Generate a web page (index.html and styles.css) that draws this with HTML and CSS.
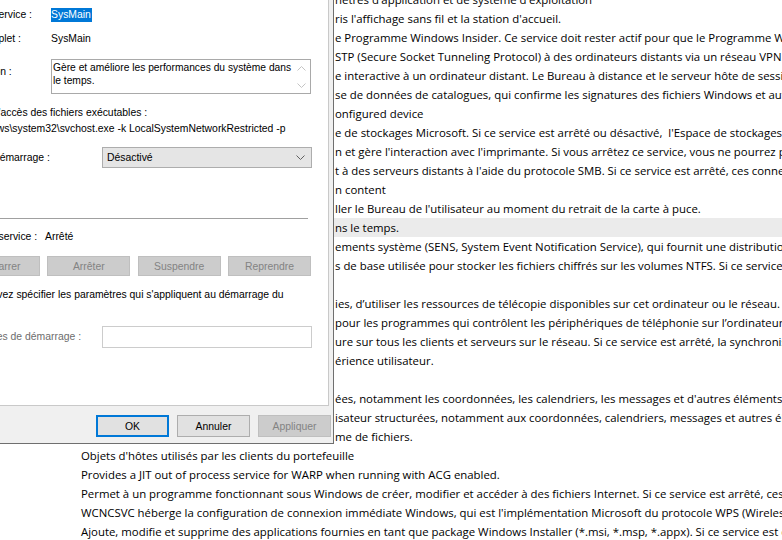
FILE: index.html
```html
<!DOCTYPE html>
<html lang="fr">
<head>
<meta charset="utf-8">
<title>Propriétés de SysMain</title>
<link rel="stylesheet" href="styles.css">
</head>
<body>
<div class="screen">
  <ul class="list">
    <li class="item cut">nètres d'application et de système d'exploitation</li>
    <li class="item cut">ris l'affichage sans fil et la station d'accueil.</li>
    <li class="item cut">e Programme Windows Insider. Ce service doit rester actif pour que le Programme Windows Insider fonctionne.</li>
    <li class="item cut">STP (Secure Socket Tunneling Protocol) à des ordinateurs distants via un réseau VPN. Si ce service est désactivé</li>
    <li class="item cut">e interactive à un ordinateur distant. Le Bureau à distance et le serveur hôte de session Bureau à distance</li>
    <li class="item cut">se de données de catalogues, qui confirme les signatures des fichiers Windows et autorise</li>
    <li class="item cut">onfigured device</li>
    <li class="item cut">e de stockages Microsoft. Si ce service est arrêté ou désactivé,&nbsp; l'Espace de stockages ne fonctionnera pas</li>
    <li class="item cut">n et gère l'interaction avec l'imprimante. Si vous arrêtez ce service, vous ne pourrez plus imprimer</li>
    <li class="item cut">t à des serveurs distants à l'aide du protocole SMB. Si ce service est arrêté, ces connexions</li>
    <li class="item cut">n content</li>
    <li class="item cut">ller le Bureau de l'utilisateur au moment du retrait de la carte à puce.</li>
    <li class="item cut selected">ns le temps.</li>
    <li class="item cut">ements système (SENS, System Event Notification Service), qui fournit une distribution</li>
    <li class="item cut">s de base utilisée pour stocker les fichiers chiffrés sur les volumes NTFS. Si ce service est arrêté</li>
    <li class="item cut"></li>
    <li class="item cut">ies, d’utiliser les ressources de télécopie disponibles sur cet ordinateur ou le réseau.</li>
    <li class="item cut">pour les programmes qui contrôlent les périphériques de téléphonie sur l’ordinateur local</li>
    <li class="item cut">ure sur tous les clients et serveurs sur le réseau. Si ce service est arrêté, la synchronisation</li>
    <li class="item cut">érience utilisateur.</li>
    <li class="item cut"></li>
    <li class="item cut">ées, notamment les coordonnées, les calendriers, les messages et d'autres éléments de</li>
    <li class="item cut">isateur structurées, notamment aux coordonnées, calendriers, messages et autres éléments</li>
    <li class="item cut">me de fichiers.</li>
    <li class="item">Objets d'hôtes utilisés par les clients du portefeuille</li>
    <li class="item">Provides a JIT out of process service for WARP when running with ACG enabled.</li>
    <li class="item">Permet à un programme fonctionnant sous Windows de créer, modifier et accéder à des fichiers Internet. Si ce service est arrêté, ces fichiers</li>
    <li class="item">WCNCSVC héberge la configuration de connexion immédiate Windows, qui est l'implémentation Microsoft du protocole WPS (Wireless Protected Setup)</li>
    <li class="item">Ajoute, modifie et supprime des applications fournies en tant que package Windows Installer (*.msi, *.msp, *.appx). Si ce service est désactivé</li>
  </ul>

  <div class="dialog">
    <div class="panel">
      <div class="row r-name"><span class="lbl">Nom du service :</span><span class="sel">SysMain</span></div>
      <div class="row r-full"><span class="lbl">Nom complet :</span><span>SysMain</span></div>
      <div class="row r-desc">
        <span class="lbl lbl-desc">Description :</span>
        <div class="textarea">
          <div class="ta-text">Gère et améliore les performances du système dans<br>le temps.</div>
          <div class="ta-scroll">
            <svg class="arrow" width="9" height="5" viewBox="0 0 9 5"><polyline points="0.5,4.5 4.5,0.5 8.5,4.5" fill="none" stroke="#c4c4c4" stroke-width="1"/></svg>
            <svg class="arrow" width="9" height="5" viewBox="0 0 9 5"><polyline points="0.5,0.5 4.5,4.5 8.5,0.5" fill="none" stroke="#c4c4c4" stroke-width="1"/></svg>
          </div>
        </div>
      </div>
      <div class="plain path-lbl">Chemin d'accès des fichiers exécutables :</div>
      <div class="plain path">C:\Windows\system32\svchost.exe -k LocalSystemNetworkRestricted -p</div>
      <div class="row r-type">
        <span class="lbl-wide">Type de démarrage :</span>
        <div class="select"><span>Désactivé</span><svg width="9" height="5" viewBox="0 0 9 5"><polyline points="0.5,0.5 4.5,4.5 8.5,0.5" fill="none" stroke="#606060" stroke-width="1"/></svg></div>
      </div>
      <div class="sep"></div>
      <div class="row r-status"><span class="lbl-status">Statut du service :</span><span>Arrêté</span></div>
      <div class="svc-btns">
        <button class="btn dis svc">Démarrer</button>
        <button class="btn dis svc">Arrêter</button>
        <button class="btn dis svc">Suspendre</button>
        <button class="btn dis svc">Reprendre</button>
      </div>
      <p class="hint">Vous pouvez spécifier les paramètres qui s'appliquent au démarrage du<br>service.</p>
      <div class="row r-params">
        <span class="lbl-wide grey">Paramètres de démarrage :</span>
        <div class="input"></div>
      </div>
    </div>
    <div class="actions">
      <button class="btn act ok">OK</button>
      <button class="btn act">Annuler</button>
      <button class="btn act dis">Appliquer</button>
    </div>
  </div>
</div>
</body>
</html>
```
FILE: styles.css
```css
html, body { margin: 0; padding: 0; background: #fff; }
.screen { position: relative; width: 782px; height: 540px; overflow: hidden; background: #fff; }

/* services list in the background */
.list {
  list-style: none; margin: -10px 0 0 0; padding: 0;
  font-family: "Open Sans", "Noto Sans", sans-serif; font-size: 11.4px; color: #000;
}
.item { height: 19px; line-height: 19px; padding-left: 81px; white-space: nowrap; overflow: hidden; }
.item.cut { padding-left: 335px; }
.item.selected { background: #ebebeb; }

/* properties dialog */
.dialog {
  position: absolute; left: -60px; top: -30px;
  width: 394px; height: 474px; box-sizing: border-box;
  border: 1px solid #6f6f6f; background: #f0f0f0;
  padding: 0 4px 0 9px;
  font-family: "Liberation Sans", Arial, sans-serif; font-size: 10.4px; color: #000;
}
.panel {
  height: 435px; box-sizing: border-box;
  background: #fff; border: 1px solid #c9c9c9; border-top: 0;
  padding: 37px 0 0 3px;
}
.row { display: flex; align-items: center; line-height: 14px; }
.lbl { width: 97px; flex: none; white-space: nowrap; }
.lbl-wide { width: 148px; flex: none; white-space: nowrap; }
.lbl-status { width: 91px; flex: none; white-space: nowrap; }
.grey { color: #6d6d6d; }
.sel { background: #0078d7; color: #fff; padding: 0 1px 0 0; }

.r-name { height: 14px; }
.r-full { margin-top: 10px; height: 14px; }
.r-desc { margin-top: 13px; align-items: flex-start; }
.lbl-desc { margin-top: 6px; }
.textarea {
  width: 260px; height: 35px; box-sizing: border-box;
  border: 1px solid #a9a9a9; background: #fff;
  display: flex; justify-content: space-between;
}
.ta-text { padding: 1px 0 0 1px; line-height: 13px; white-space: nowrap; font-size: 10.25px; }
.ta-scroll {
  width: 17px; display: flex; flex-direction: column; align-items: center;
  justify-content: space-between; padding: 6px 0 5px; box-sizing: border-box;
}
.arrow { display: block; }

.plain { line-height: 14px; white-space: nowrap; }
.path-lbl { margin-top: 12px; }
.path { margin-top: 2px; }

.r-type { margin-top: 11px; height: 21px; }
.select {
  width: 210px; height: 21px; box-sizing: border-box;
  border: 1px solid #adadad; background: #e5e5e5;
  display: flex; align-items: center; justify-content: space-between;
  padding: 0 6px 0 4px;
}

.sep { margin-top: 50px; height: 1px; width: 354px; background: #a0a0a0; }
.r-status { margin-top: 11px; height: 14px; }

.btn {
  font-family: inherit; font-size: inherit; margin: 0; padding: 0;
  box-sizing: border-box; background: #e1e1e1; border: 1px solid #adadad; color: #000;
}
.btn.dis { background: #cccccc; border-color: #bfbfbf; color: #838383; }
.svc-btns { margin: 12px 0 0 3px; width: 354px; display: flex; justify-content: space-between; }
.svc { width: 83px; height: 20px; }

.hint { margin: 12px 0 0 0; line-height: 14px; white-space: nowrap; }
.r-params { margin-top: 10px; height: 22px; }
.input { width: 210px; height: 22px; box-sizing: border-box; border: 1px solid #cccccc; background: #fff; }

.actions { margin: 9px -2px 0 0; display: flex; justify-content: flex-end; gap: 8px; }
.act { width: 73px; height: 22px; }
.act.ok { border: 2px solid #0078d7; }
```
